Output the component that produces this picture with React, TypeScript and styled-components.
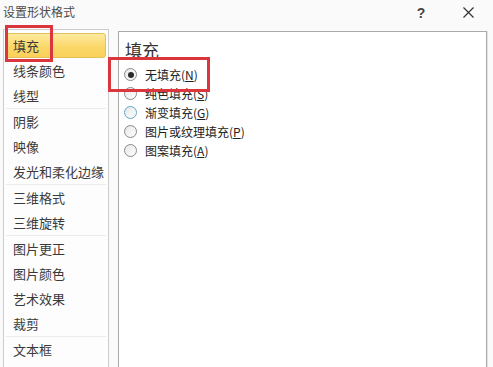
import React from 'react';
import styled, { createGlobalStyle } from 'styled-components';

const GlobalStyle = createGlobalStyle`
  html, body {
    margin: 0;
    padding: 0;
    background: #fafafa;
  }
  body {
    font-family: "Noto Sans CJK SC", "Noto Sans", sans-serif;
  }
`;

const Dialog = styled.div`
  position: relative;
  width: 493px;
  height: 367px;
  overflow: hidden;
  display: flex;
  flex-direction: column;
  background: #fafafa;
`;

const TitleBar = styled.div`
  height: 25px;
  display: flex;
  align-items: center;
  padding: 0 0 0 3px;
  flex-shrink: 0;
`;

const Title = styled.div`
  font-size: 12px;
  color: #4a4a4a;
  flex: 1;
  line-height: 1;
  margin-top: -2px;
`;

const TitleButton = styled.div`
  width: 28px;
  height: 20px;
  display: flex;
  align-items: center;
  justify-content: center;
  color: #444;
  font-family: "Liberation Sans", Arial, sans-serif;
  font-size: 14px;
  font-weight: bold;
`;

const TitleButtons = styled.div`
  display: flex;
  align-items: center;
  gap: 19px;
  margin-right: 11px;
`;

const Body = styled.div`
  flex: 1;
  display: flex;
  padding: 4px 0 0 3px;
  gap: 9px;
  min-height: 0;
`;

const Sidebar = styled.div`
  width: 100px;
  border: 1px solid #cdcdcd;
  border-bottom: none;
  background: #fdfdfd;
  padding: 3px 2px 0 2px;
  flex-shrink: 0;
`;

const Group = styled.div<{ $last?: boolean }>`
  border-bottom: ${(p) => (p.$last ? 'none' : '1px solid #ececec')};
`;

const Item = styled.div<{ $active?: boolean }>`
  height: 25px;
  box-sizing: border-box;
  display: flex;
  align-items: center;
  padding-left: 6px;
  font-size: 13px;
  color: #3a3a3a;
  border-radius: 3px;
  border: 1px solid ${(p) => (p.$active ? '#e2c05c' : 'transparent')};
  background: ${(p) =>
    p.$active ? 'linear-gradient(#fde9a0, #fbd86a 55%, #f9d05a)' : 'transparent'};
`;

const Content = styled.div`
  flex: 1;
  margin-top: 2px;
  margin-right: 6px;
  border: 1px solid #a9a9a9;
  border-bottom: none;
  background: #fff;
  padding: 6px 0 0 6px;
  box-shadow: 1px 0 0 #e4e4e4;
`;

const Heading = styled.div`
  font-size: 17px;
  line-height: 24px;
  height: 24px;
  color: #333;
  margin-bottom: 3px;
`;

const Option = styled.label`
  display: flex;
  align-items: center;
  gap: 8px;
  height: 19px;
  font-size: 12px;
  color: #222;
`;

const Radio = styled.span<{ $checked?: boolean; $hover?: boolean }>`
  width: 13px;
  height: 13px;
  margin-left: -1px;
  box-sizing: border-box;
  border-radius: 50%;
  border: 1px solid ${(p) => (p.$hover ? '#5aa9d0' : '#8a8a8a')};
  background: linear-gradient(135deg, #e6e6e6, #ffffff);
  display: flex;
  align-items: center;
  justify-content: center;

  &::after {
    content: '';
    width: 6px;
    height: 6px;
    border-radius: 50%;
    background: ${(p) => (p.$checked ? '#2a2a2a' : 'transparent')};
  }
`;

const Key = styled.span`
  text-decoration: underline;
`;

const Mark = styled.div<{ $x: number; $y: number; $w: number; $h: number }>`
  position: absolute;
  left: ${(p) => p.$x}px;
  top: ${(p) => p.$y}px;
  width: ${(p) => p.$w}px;
  height: ${(p) => p.$h}px;
  box-sizing: border-box;
  border: 3px solid #d9363e;
  pointer-events: none;
`;

const groups: { label: string; active?: boolean }[][] = [
  [{ label: '填充', active: true }, { label: '线条颜色' }, { label: '线型' }],
  [{ label: '阴影' }, { label: '映像' }, { label: '发光和柔化边缘' }],
  [{ label: '三维格式' }, { label: '三维旋转' }],
  [{ label: '图片更正' }, { label: '图片颜色' }, { label: '艺术效果' }, { label: '裁剪' }],
  [{ label: '文本框' }],
];

const options = [
  { label: '无填充', key: 'N', checked: true },
  { label: '纯色填充', key: 'S' },
  { label: '渐变填充', key: 'G', hover: true },
  { label: '图片或纹理填充', key: 'P' },
  { label: '图案填充', key: 'A' },
];

const App: React.FC = () => {
  return (
    <>
      <GlobalStyle />
      <Dialog>
        <TitleBar>
          <Title>设置形状格式</Title>
          <TitleButtons>
            <TitleButton>?</TitleButton>
            <TitleButton>
              <svg width="11" height="11" viewBox="0 0 11 11">
                <path d="M0.5 0.5 L10.5 10.5 M10.5 0.5 L0.5 10.5" stroke="#333" strokeWidth="1.2" />
              </svg>
            </TitleButton>
          </TitleButtons>
        </TitleBar>
        <Body>
          <Sidebar>
            {groups.map((g, i) => (
              <Group key={i} $last={i === groups.length - 1}>
                {g.map((it) => (
                  <Item key={it.label} $active={it.active}>
                    {it.label}
                  </Item>
                ))}
              </Group>
            ))}
          </Sidebar>
          <Content>
            <Heading>填充</Heading>
            {options.map((o) => (
              <Option key={o.key}>
                <Radio $checked={o.checked} $hover={o.hover} />
                <span>
                  {o.label}(<Key>{o.key}</Key>)
                </span>
              </Option>
            ))}
          </Content>
        </Body>
        <Mark $x={5} $y={25} $w={48} $h={37} />
        <Mark $x={108} $y={57} $w={102} $h={35} />
      </Dialog>
    </>
  );
};

export default App;
